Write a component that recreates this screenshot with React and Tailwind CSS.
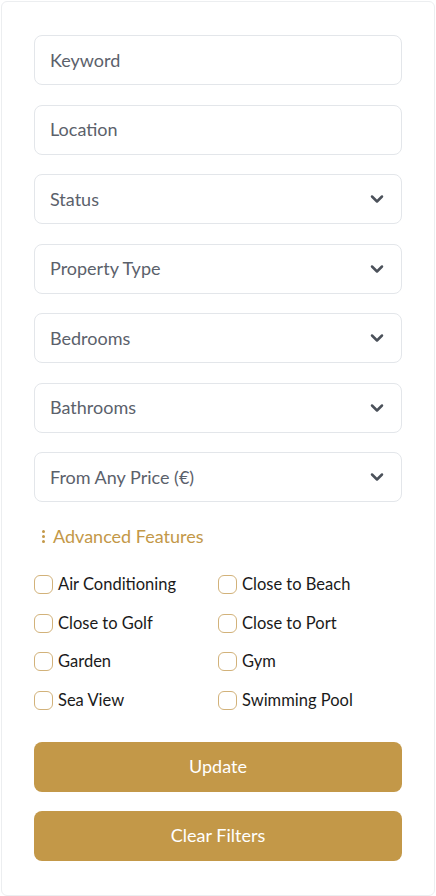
import { ChevronDown } from 'lucide-react';

const font = { fontFamily: 'Lato, "Open Sans", sans-serif' };

const TextField = ({ placeholder }) => (
  <div className="h-[50px] w-full rounded-lg border border-[#e3e6ea] bg-white px-[15px] flex items-center">
    <span className="text-[18px] text-[#5b616b]">{placeholder}</span>
  </div>
);

const SelectField = ({ label }) => (
  <div className="h-[50px] w-full rounded-lg border border-[#e3e6ea] bg-white pl-[15px] pr-[14px] flex items-center justify-between">
    <span className="text-[18px] text-[#5b616b]">{label}</span>
    <ChevronDown size={20} strokeWidth={3} className="text-[#4b515a]" />
  </div>
);

const features = [
  'Air Conditioning',
  'Close to Beach',
  'Close to Golf',
  'Close to Port',
  'Garden',
  'Gym',
  'Sea View',
  'Swimming Pool',
];

export default function App() {
  return (
    <div className="min-h-screen bg-white p-px" style={font}>
      <div className="rounded-md border border-[#eceef0] bg-white px-[32px] pt-[33px] pb-[34px]">
        <div className="flex flex-col gap-[19.5px]">
          <TextField placeholder="Keyword" />
          <TextField placeholder="Location" />
          <SelectField label="Status" />
          <SelectField label="Property Type" />
          <SelectField label="Bedrooms" />
          <SelectField label="Bathrooms" />
          <SelectField label="From Any Price (€)" />
        </div>

        <div className="mt-[21px] flex items-center gap-[8px] pl-[8px] text-[18px] text-[#c39848]">
          <span className="flex flex-col gap-[2px]">
            <span className="h-[3px] w-[3px] rounded-full bg-[#c39848]" />
            <span className="h-[3px] w-[3px] rounded-full bg-[#c39848]" />
            <span className="h-[3px] w-[3px] rounded-full bg-[#c39848]" />
          </span>
          <span>Advanced Features</span>
        </div>

        <div className="mt-[25px] grid grid-cols-2 gap-y-[19.5px] gap-x-0">
          {features.map((f) => (
            <label key={f} className="flex items-center gap-[5px] h-[19px]">
              <span className="h-[19px] w-[19px] rounded-[6px] border-[1.5px] border-[#d2b27a] bg-white shrink-0" />
              <span className="text-[16.5px] text-[#1a1a1a]">{f}</span>
            </label>
          ))}
        </div>

        <div className="mt-[32px] flex flex-col gap-[19px]">
          <button className="h-[50px] w-full rounded-lg bg-[#c39848] text-[18px] text-white">
            Update
          </button>
          <button className="h-[50px] w-full rounded-lg bg-[#c39848] text-[18px] text-white">
            Clear Filters
          </button>
        </div>
      </div>
    </div>
  );
}
